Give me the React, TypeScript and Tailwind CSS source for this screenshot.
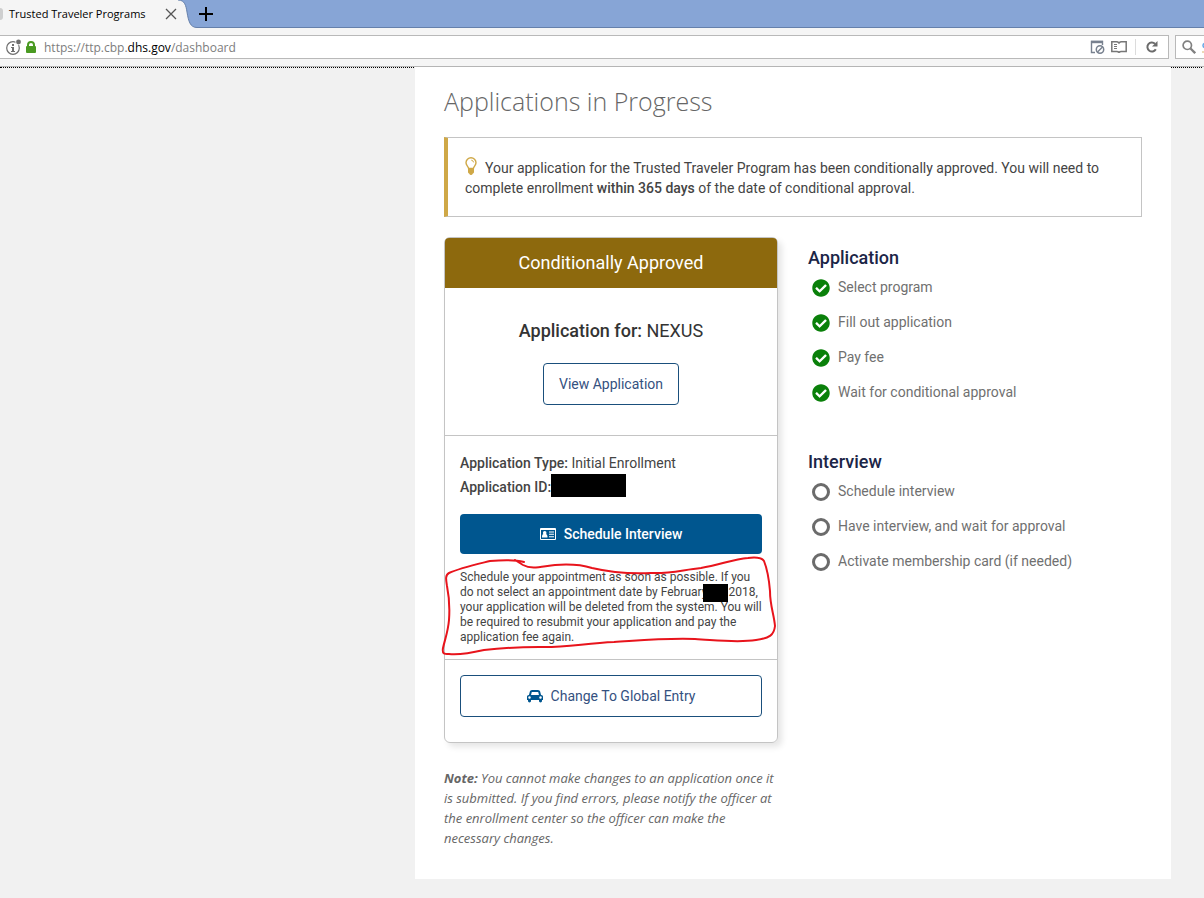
import type { ReactNode } from 'react';
import { FaCheckCircle } from 'react-icons/fa';

const applicationSteps = ['Select program', 'Fill out application', 'Pay fee', 'Wait for conditional approval'];
const interviewSteps = ['Schedule interview', 'Have interview, and wait for approval', 'Activate membership card (if needed)'];

function BulbIcon() {
  return (
    <svg viewBox="0 0 12 18" className="mr-2 inline-block h-[18px] w-3 align-[-2px]" aria-hidden="true">
      <path d="M3.6 11.5C3.4 9.4 1 8.5 1 5.8a5 5 0 0 1 10 0c0 2.7-2.4 3.6-2.6 5.7z" fill="none" stroke="#cfa847" strokeWidth="1.4" />
      <path d="M6.3 3.2q2 .2 2.3 2.2" fill="none" stroke="#cfa847" strokeWidth="1" />
      <path d="M3 11.3h6v4q0 1-1.300 1.400Q7.300 18 6 18t-1.700-1.300Q3 16.300 3 15.300z" fill="#cfa847" />
    </svg>
  );
}

function CardIcon() {
  return (
    <svg viewBox="0 0 16 12" className="h-3 w-4" aria-hidden="true">
      <path fillRule="evenodd" fill="#fff" d="M1 0h14q1 0 1 1v10q0 1-1 1H1q-1 0-1-1V1q0-1 1-1zM1 2v9h14V2z" />
      <circle cx="4.7" cy="4.9" r="1.8" fill="#fff" />
      <path d="M2 9.500V8.300q0-2 1.500-2.300h2.400q1.500.3 1.500 2.300v1.200z" fill="#fff" />
      <path d="M9 3.500h5v1H9zM9 5.800h5v1H9zM9 8.200h5v1H9z" fill="#fff" />
    </svg>
  );
}

function CarIcon() {
  return (
    <svg viewBox="0 0 2048 1792" className="h-[14px] w-4" fill="#00568f" aria-hidden="true">
      <path d="M480 1088q0-66-47-113t-113-47-113 47-47 113 47 113 113 47 113-47 47-113zm36-320h1016l-89-357q-2-8-14-17.5t-21-9.500h-768q-9 0-21 9.500t-14 17.500zm1372 320q0-66-47-113t-113-47-113 47-47 113 47 113 113 47 113-47 47-113zm160-96v384q0 14-9 23t-23 9h-96v128q0 80-56 136t-136 56-136-56-56-136v-128h-1024v128q0 80-56 136t-136 56-136-56-56-136v-128h-96q-14 0-23-9t-9-23v-384q0-93 65.500-158.500t158.500-65.500h28l105-419q23-94 104-157.500t179-63.500h768q98 0 179 63.500t104 157.500l105 419h28q93 0 158.500 65.500t65.500 158.500z" />
    </svg>
  );
}

function TabBar() {
  return (
    <div className="flex h-7 bg-[#87a5d6] font-['Open_Sans',sans-serif] shadow-[inset_0_-1px_0_#6580ab]">
      <div className="flex h-7 items-center bg-[#f5f5f5]">
        <span className="h-3 w-[3px] rounded-r-full bg-[#cfcfcf]" />
        <span className="ml-1.5 text-[11px] text-black">Trusted Traveler Programs</span>
        <button aria-label="Close tab" className="ml-[19px]">
          <svg viewBox="0 0 12 12" className="size-3" stroke="#555" strokeWidth="1.3">
            <path d="M1 1l10 10M11 1L1 11" />
          </svg>
        </button>
      </div>
      <svg viewBox="0 0 20 28" className="h-7 w-5" aria-hidden="true">
        <path d="M0 0h1c7 0 8 6 9 12 1.500 9 3 15.500 10 15.500V28H0z" fill="#f5f5f5" />
        <path d="M1 0c7 0 8 6 9 12 1.500 9 3 15.500 10 15.500" fill="none" stroke="#6580ab" />
      </svg>
      <button aria-label="New tab" className="ml-0.5 flex items-center">
        <svg viewBox="0 0 14 14" className="size-[14px]" stroke="#000" strokeWidth="2">
          <path d="M7 0v14M0 7h14" />
        </svg>
      </button>
    </div>
  );
}

function AddressBar() {
  return (
    <div className="flex h-[39px] items-center gap-1.5 border-b border-[#b5b5b5] bg-[#f5f5f5]">
      <div className="flex h-6 flex-1 items-center border border-l-0 border-[#b9b9b9] bg-white pr-[10px] pl-[5px]">
        <svg viewBox="0 0 17 16" className="h-4 w-[17px]" aria-hidden="true">
          <circle cx="8" cy="9" r="6.3" fill="none" stroke="#6e6e6e" strokeWidth="1.2" />
          <path d="M7 5h2v2H7zM6 8h3v4h1v1H6v-1h1V9H6z" fill="#6e6e6e" />
          <circle cx="13.5" cy="3" r="3.2" fill="#fff" />
          <circle cx="13.5" cy="3" r="2.4" fill="#6e6e6e" />
        </svg>
        <svg viewBox="0 0 10 12" className="ml-1 h-3 w-[10px]" aria-hidden="true">
          <path d="M2 6V4a3 3 0 0 1 6 0v2" fill="none" stroke="#4a9a22" strokeWidth="2" />
          <rect y="5" width="10" height="7" rx="1" fill="#4a9a22" />
        </svg>
        <p className="ml-2 flex-1 pt-0.5 font-['Open_Sans',sans-serif] text-[12px] leading-4 text-[#7d7d7d]">
          https://ttp.cbp.<span className="text-black">dhs.gov</span>/dashboard
        </p>
        <svg viewBox="0 0 15 14" className="h-[14px] w-[15px]" fill="none" stroke="#78818f" aria-hidden="true">
          <path d="M5 12.500H1.500V1.500h11V5" strokeWidth="1.4" />
          <path d="M1 2h12" strokeWidth="2.4" />
          <circle cx="10" cy="9.5" r="3.7" strokeWidth="1.5" />
          <path d="M7.500 12l5-5" strokeWidth="1.5" />
        </svg>
        <svg viewBox="0 0 16 12" className="ml-1.5 h-3 w-4" fill="none" stroke="#777" aria-hidden="true">
          <path d="M8 2Q7 .8 5.500.8H.8v9.700h5Q7 10.500 8 11.500q1-1 2.200-1h5V.8h-4.700Q9 .8 8 2z" strokeWidth="1.5" />
          <path d="M3 3.500h3M3 5.500h3M3 7.500h3" />
        </svg>
        <span className="mr-[10px] ml-2 h-4 w-px bg-[#dcdcdc]" />
        <button aria-label="Reload">
          <svg viewBox="0 0 12 12" className="size-3" aria-hidden="true">
            <path d="M9.800 8.300A4.500 4.500 0 1 1 9 2.800" fill="none" stroke="#6b6b6b" strokeWidth="2" />
            <path d="M11.500 0v5.500H6z" fill="#6b6b6b" />
          </svg>
        </button>
      </div>
      <div className="flex h-6 w-[29px] items-center overflow-hidden border border-r-0 border-[#b9b9b9] bg-white pl-1.5">
        <svg viewBox="0 0 14 14" className="size-[14px] shrink-0" fill="none" stroke="#808080" aria-hidden="true">
          <circle cx="5.3" cy="5.3" r="4.2" strokeWidth="1.7" />
          <path d="M8.500 8.500l4.700 4.700" strokeWidth="2.3" />
        </svg>
        <svg viewBox="0 0 3 12" className="ml-1.5 h-3 w-[3px] shrink-0" fill="none" aria-hidden="true">
          <path d="M3 2.500Q1 2.500 1 4.500t2 2" stroke="#63a8e8" strokeWidth="1.5" />
          <path d="M0 11h3" stroke="#d9b36a" />
        </svg>
      </div>
    </div>
  );
}

function Steps({ title, steps, done }: { title: string; steps: string[]; done?: boolean }) {
  return (
    <section>
      <h2 className="text-[18px] leading-5 font-medium text-[#1b2547]">{title}</h2>
      <ul className="mt-[9px] ml-1 flex flex-col gap-[15px]">
        {steps.map((step) => (
          <li key={step} className="flex h-5 items-center gap-2">
            {done ? (
              <FaCheckCircle className="mt-0.5 size-[18px] text-[#0a800a]" />
            ) : (
              <span className="mt-0.5 size-[18px] rounded-full border-[3px] border-[#6b6b6b]" />
            )}
            <span className="text-[14px] text-[#707070]">{step}</span>
          </li>
        ))}
      </ul>
    </section>
  );
}

function OutlineButton({ className, children }: { className: string; children: ReactNode }) {
  return (
    <button className={`flex h-[42px] items-center justify-center gap-2 rounded border border-[#1a4f7c] bg-white text-[14px] text-[#35517f] ${className}`}>
      {children}
    </button>
  );
}

function ApplicationCard() {
  return (
    <article className="rounded-md border border-[#c4c4c4] shadow-[4px_4px_6px_rgba(0,0,0,0.1)]">
      <h2 className="rounded-t-[4px] bg-[#8d690d] text-center text-[18px] leading-[50px] text-white">Conditionally Approved</h2>
      <div className="flex flex-col items-center border-b border-[#c4c4c4] pt-[31px] pb-[30px]">
        <p className="mb-[21px] text-[18px] leading-[23px] text-[#333]">
          <strong className="font-medium">Application for:</strong> NEXUS
        </p>
        <OutlineButton className="px-[15px]">View Application</OutlineButton>
      </div>
      <div className="relative border-b border-[#c4c4c4] px-[15px] pt-[15px] pb-[14px] text-[#444]">
        <p className="text-[14px] leading-6">
          <strong className="font-medium">Application Type:</strong> Initial Enrollment
        </p>
        <p className="flex h-6 items-center text-[14px] leading-6">
          <strong className="font-medium">Application ID:</strong>
          <span className="mb-1 h-[23px] w-[75px] bg-black" />
        </p>
        <button className="mt-[15px] flex h-10 w-full items-center justify-center gap-2 rounded bg-[#00568f] text-[14px] font-medium text-white">
          <CardIcon />
          Schedule Interview
        </button>
        <p className="mt-4 text-[12px] leading-[15px]">
          Schedule your appointment as soon as possible. If you do not select an appointment date by February
          <span className="-ml-1 inline-block h-[18px] w-[25px] bg-black align-middle -my-1" />
          2018, your application will be deleted from the system. You will be required to resubmit your application and pay the application fee again.
        </p>
        {/* hand-drawn marker around the deadline warning */}
        <svg viewBox="0 0 336 102" className="pointer-events-none absolute bottom-0.5 -left-1 h-[102px] w-[336px]" fill="none" stroke="#e8141c" strokeWidth="2" strokeLinecap="round" strokeLinejoin="round" aria-hidden="true">
          <path d="M83 7C72 4 60 5 49 6 37 9 19 13 8 18 4 20 5 25 6 31c2 10 3 20 2 34-1 12-4 19-6 28-1 6 1 6 6 6 10 1 22-1 35-4 17-2 38-3 55-3 25 1 47-4 75-5 31-2 51-4 81-3 20 1 42 4 61 1 14-2 18-5 19-14-1-12-5-20-5-35-1-12-2-20-6-30C321 3 315 2 307 3c-15 1-28 7-47 10-19 2-32 6-50 5-22 1-42-1-59-5-13-4-24-4-37-3-12 1-23 5-32 0L74 5" />
        </svg>
      </div>
      <div className="px-[15px] pt-[15px] pb-[25px]">
        <OutlineButton className="w-full">
          <CarIcon />
          Change To Global Entry
        </OutlineButton>
      </div>
    </article>
  );
}

export default function App() {
  return (
    <div className="flex min-h-screen flex-col bg-[#f1f1f1] font-['Roboto',sans-serif]">
      <header>
        <TabBar />
        <AddressBar />
      </header>
      <div className="mr-0.5 border-t border-dotted border-black pr-[31px] pl-[415px]">
        <main className="-mt-px bg-white px-[29px] pt-[18px] pb-[31px]">
          <h1 className="font-['Open_Sans',sans-serif] text-[25px] leading-8 font-light text-[#666]">Applications in Progress</h1>
          <div className="mt-5 border border-l-4 border-[#c4c4c4] border-l-[#cfa847] px-[17px] pt-[19px] pb-[18px] text-[14px] leading-5 text-[#444]">
            <BulbIcon />
            Your application for the Trusted Traveler Program has been conditionally approved. You will need to complete enrollment{' '}
            <strong className="font-medium">within 365 days</strong> of the date of conditional approval.
          </div>
          <div className="mt-5 flex gap-[30px]">
            <div className="w-[334px] shrink-0">
              <ApplicationCard />
              <p className="mt-[25px] font-['Open_Sans',sans-serif] text-[13px] leading-5 text-[#666] italic">
                <strong>Note:</strong> You cannot make changes to an application once it is submitted. If you find errors, please notify the officer at the enrollment center so the officer can make the necessary changes.
              </p>
            </div>
            <div className="flex flex-1 flex-col gap-[50px] pt-[11px]">
              <Steps title="Application" steps={applicationSteps} done />
              <Steps title="Interview" steps={interviewSteps} />
            </div>
          </div>
        </main>
      </div>
    </div>
  );
}
